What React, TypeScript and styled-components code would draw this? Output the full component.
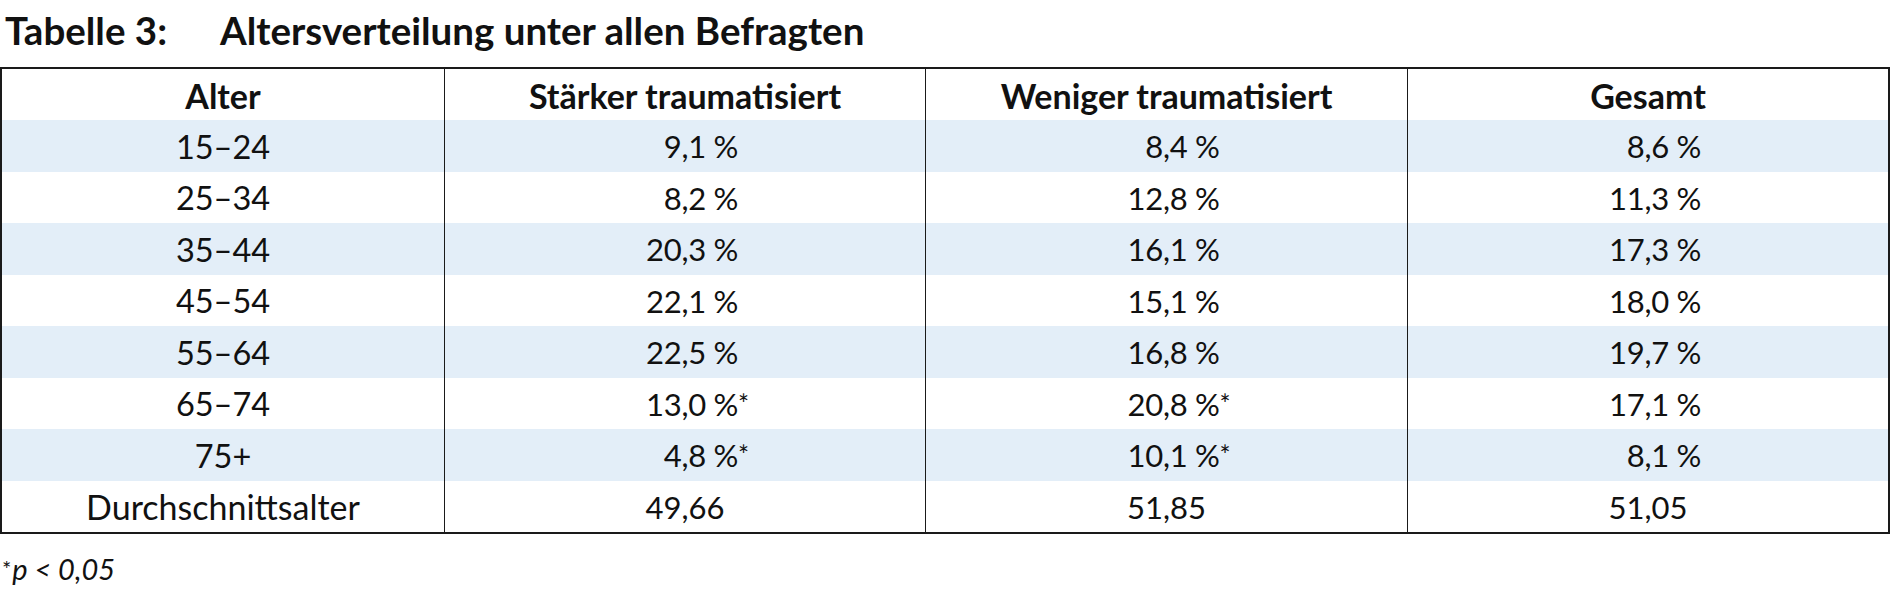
import styled, { createGlobalStyle } from "styled-components";

const GlobalStyle = createGlobalStyle`
  html, body {
    margin: 0;
    padding: 0;
    background: #fff;
  }
  body {
    font-family: Lato, "Open Sans", sans-serif;
    color: #111;
  }
`;

type Row = {
  age: string;
  values: string[];
  stars?: boolean[];
};

const ROWS: Row[] = [
  { age: "15–24", values: ["9,1 %", "8,4 %", "8,6 %"] },
  { age: "25–34", values: ["8,2 %", "12,8 %", "11,3 %"] },
  { age: "35–44", values: ["20,3 %", "16,1 %", "17,3 %"] },
  { age: "45–54", values: ["22,1 %", "15,1 %", "18,0 %"] },
  { age: "55–64", values: ["22,5 %", "16,8 %", "19,7 %"] },
  {
    age: "65–74",
    values: ["13,0 %", "20,8 %", "17,1 %"],
    stars: [true, true, false],
  },
  {
    age: "75+",
    values: ["4,8 %", "10,1 %", "8,1 %"],
    stars: [true, true, false],
  },
];

const HEADERS = [
  "Alter",
  "Stärker traumatisiert",
  "Weniger traumatisiert",
  "Gesamt",
];

const MEANS = ["49,66", "51,85", "51,05"];

const Page = styled.div`
  width: 1890px;
`;

const Title = styled.h1`
  display: flex;
  margin: 0;
  height: 67px;
  padding: 7px 0 0 5px;
  box-sizing: border-box;
  font-size: 38.5px;
  font-weight: 700;
  line-height: normal;
  color: #111;
`;

const TitleLabel = styled.span`
  width: 215px;
  flex-shrink: 0;
`;

const Table = styled.div`
  display: grid;
  grid-template-columns: 442px 481px 482px 1fr;
  grid-template-rows: 51px;
  grid-auto-rows: 51.5px;
  border: 2px solid #1a1a1a;
  box-sizing: border-box;
  width: 1890px;
`;

const Cell = styled.div<{ $striped?: boolean; $first?: boolean; $head?: boolean }>`
  display: flex;
  align-items: center;
  justify-content: center;
  background: ${({ $striped }) => ($striped ? "#e3eef8" : "#fff")};
  border-left: ${({ $first }) => ($first ? "none" : "1px solid #1a1a1a")};
  font-size: 34px;
  font-weight: ${({ $head }) => ($head ? 700 : 400)};
  padding-top: 1px;
  box-sizing: border-box;
  white-space: nowrap;
`;

const AgeLabel = styled.span`
  font-size: 32.5px;
`;

const Figure = styled.span<{ $plain?: boolean }>`
  display: inline-block;
  width: ${({ $plain }) => ($plain ? "auto" : "106px")};
  text-align: right;
  font-size: 31px;
  letter-spacing: ${({ $plain }) => ($plain ? "0" : "-0.3px")};
`;

const Star = styled.span`
  display: inline-block;
  width: 0;
  font-size: 26px;
  vertical-align: 2px;
  overflow: visible;
`;

const Footnote = styled.p`
  margin: 0;
  padding: 17px 0 0 2px;
  font-size: 29px;
  font-style: italic;
  line-height: normal;
  color: #111;
`;

const FootStar = styled.span`
  font-style: normal;
  font-size: 22px;
  vertical-align: 3px;
  margin-right: 1px;
`;

const App = () => {
  return (
    <Page>
      <GlobalStyle />
      <Title>
        <TitleLabel>Tabelle 3:</TitleLabel>
        <span>Altersverteilung unter allen Befragten</span>
      </Title>
      <Table>
        {HEADERS.map((h, i) => (
          <Cell key={h} $head $first={i === 0}>
            {h}
          </Cell>
        ))}
        {ROWS.map((row, r) => {
          const striped = r % 2 === 0;
          return [
            <Cell key={`${row.age}-a`} $first $striped={striped}>
              <AgeLabel>{row.age}</AgeLabel>
            </Cell>,
            ...row.values.map((v, i) => (
              <Cell key={`${row.age}-${i}`} $striped={striped}>
                <Figure>
                  {v}
                  {row.stars?.[i] ? <Star>*</Star> : null}
                </Figure>
              </Cell>
            )),
          ];
        })}
        <Cell $first>Durchschnittsalter</Cell>
        {MEANS.map((m) => (
          <Cell key={m}>
            <Figure $plain>{m}</Figure>
          </Cell>
        ))}
      </Table>
      <Footnote>
        <FootStar>*</FootStar>p &lt; 0,05
      </Footnote>
    </Page>
  );
};

export default App;
